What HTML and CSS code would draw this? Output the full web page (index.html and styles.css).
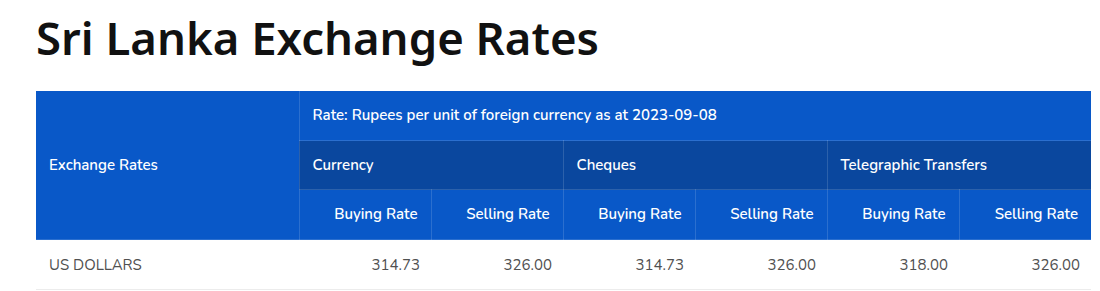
FILE: index.html
```html
<!DOCTYPE html>
<html lang="en">
<head>
<meta charset="utf-8">
<title>Sri Lanka Exchange Rates</title>
<link rel="stylesheet" href="styles.css">
</head>
<body>
<main class="page">
  <h1 class="title">Sri Lanka Exchange Rates</h1>
  <table class="rates">
    <colgroup>
      <col class="c-name">
      <col class="c-rate"><col class="c-rate"><col class="c-rate">
      <col class="c-rate"><col class="c-rate"><col class="c-rate">
    </colgroup>
    <thead>
      <tr>
        <th rowspan="3" class="h-name">Exchange Rates</th>
        <th colspan="6" class="h-note">Rate: Rupees per unit of foreign currency as at 2023-09-08</th>
      </tr>
      <tr class="h-group">
        <th colspan="2">Currency</th>
        <th colspan="2">Cheques</th>
        <th colspan="2">Telegraphic Transfers</th>
      </tr>
      <tr class="h-sub">
        <th>Buying Rate</th><th>Selling Rate</th>
        <th>Buying Rate</th><th>Selling Rate</th>
        <th>Buying Rate</th><th>Selling Rate</th>
      </tr>
    </thead>
    <tbody>
      <tr>
        <td class="d-name">US DOLLARS</td>
        <td>314.73</td><td>326.00</td>
        <td>314.73</td><td>326.00</td>
        <td>318.00</td><td>326.00</td>
      </tr>
    </tbody>
  </table>
</main>
</body>
</html>
```

FILE: styles.css
```css
html, body {
  margin: 0;
  padding: 0;
  background: #ffffff;
}

.page {
  padding: 0 9px 0 36px;
  font-family: "Nunito", "Lato", "Noto Sans", sans-serif;
}

.title {
  margin: 0;
  padding: 10px 0 27px;
  font-family: "Noto Sans", "Open Sans", sans-serif;
  font-size: 45.5px;
  line-height: 54px;
  font-weight: 600;
  color: #111111;
  letter-spacing: 0;
}

.rates {
  width: 1055px;
  border-collapse: collapse;
  table-layout: fixed;
  font-size: 15px;
}

.c-name { width: 263px; }
.c-rate { width: 132px; }

.rates th {
  background: #0958c8;
  color: #ffffff;
  font-weight: 600;
  line-height: 18px;
  padding: 15px 13px 16px;
  border: 1px solid rgba(255, 255, 255, 0.14);
  text-align: left;
}

.rates thead tr:first-child th {
  border-top: none;
}

.h-name { border-left: none !important; }

.h-note { border-right: none !important; }

.rates .h-group th {
  background: #0a479e;
  padding-bottom: 15px;
}

.h-group th:last-child,
.h-sub th:last-child {
  border-right: none;
}

.h-sub th {
  text-align: right;
}

.rates td {
  padding: 16px 11px 15px 13px;
  line-height: 18px;
  color: #505050;
  text-align: right;
  border-bottom: 1px solid #ececec;
}

.rates td.d-name {
  text-align: left;
}
```
